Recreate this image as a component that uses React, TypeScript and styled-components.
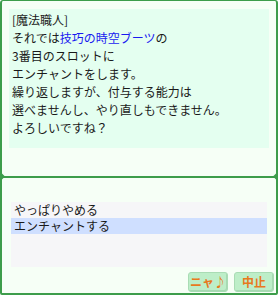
import React from "react";
import styled, { createGlobalStyle } from "styled-components";

const GlobalStyle = createGlobalStyle`
  body {
    margin: 0;
    background: #ffffff;
    font-family: "Noto Sans CJK JP", "Noto Sans", sans-serif;
  }
`;

const Frame = styled.div`
  box-sizing: border-box;
  width: 278px;
  height: 295px;
  display: flex;
  flex-direction: column;
  background: #f6fff6;
  border: 2px solid #3d9d4b;
  border-top-width: 1px;
  border-radius: 3px 3px 2px 2px;
  overflow: hidden;
`;

const MessageArea = styled.div`
  height: 175px;
  padding: 8px 7px 0 7px;
  box-sizing: border-box;
`;

const MessageBox = styled.div`
  height: 139px;
  box-sizing: border-box;
  background: #e4fff0;
  padding: 2px 3px;
  font-size: 12px;
  line-height: 18px;
  color: #1a1a1a;
`;

const Line = styled.div`
  white-space: nowrap;
`;

const Item = styled.span`
  color: #1a1af0;
`;

const Divider = styled.div`
  position: relative;
  height: 2px;
  background: #3d9d4b;
  margin: 0 -2px;
  &::before,
  &::after {
    content: "";
    position: absolute;
    top: -2px;
    width: 5px;
    height: 5px;
    background: #3d9d4b;
    transform: rotate(45deg);
  }
  &::before {
    left: -1px;
  }
  &::after {
    right: -1px;
  }
`;

const ChoiceArea = styled.div`
  flex: 1;
  display: flex;
  flex-direction: column;
  padding-top: 24px;
`;

const ChoiceList = styled.div`
  height: 65px;
  margin: 0 9px;
  background: #f6f6f8;
  font-size: 12px;
`;

const Choice = styled.div<{ $selected?: boolean }>`
  height: 16px;
  line-height: 16px;
  padding-left: 3px;
  background: ${(p) => (p.$selected ? "#cfdfff" : "transparent")};
  color: #1a1a1a;
`;

const ButtonRow = styled.div`
  display: flex;
  justify-content: flex-end;
  gap: 6px;
  padding: 5px 2px 0 0;
`;

const Button = styled.button`
  width: 40px;
  height: 20px;
  padding: 0;
  border: 1px solid #a9dcb4;
  border-radius: 3px;
  background: #bdeec8;
  color: #e8791e;
  font-family: "Noto Sans CJK JP", "DejaVu Sans", sans-serif;
  font-weight: 700;
  font-size: 12px;
  line-height: 18px;
  white-space: nowrap;
  box-shadow: inset -1px -1px 0 #a7d9b2;
`;

export default function App() {
  return (
    <>
      <GlobalStyle />
      <Frame>
        <MessageArea>
          <MessageBox>
            <Line>[魔法職人]</Line>
            <Line>
              それでは<Item>技巧の時空ブーツ</Item>の
            </Line>
            <Line>3番目のスロットに</Line>
            <Line>エンチャントをします。</Line>
            <Line>繰り返しますが、付与する能力は</Line>
            <Line>選べませんし、やり直しもできません。</Line>
            <Line>よろしいですね？</Line>
          </MessageBox>
        </MessageArea>
        <Divider />
        <ChoiceArea>
          <ChoiceList>
            <Choice>やっぱりやめる</Choice>
            <Choice $selected>エンチャントする</Choice>
          </ChoiceList>
          <ButtonRow>
            <Button>ニャ♪</Button>
            <Button>中止</Button>
          </ButtonRow>
        </ChoiceArea>
      </Frame>
    </>
  );
}
